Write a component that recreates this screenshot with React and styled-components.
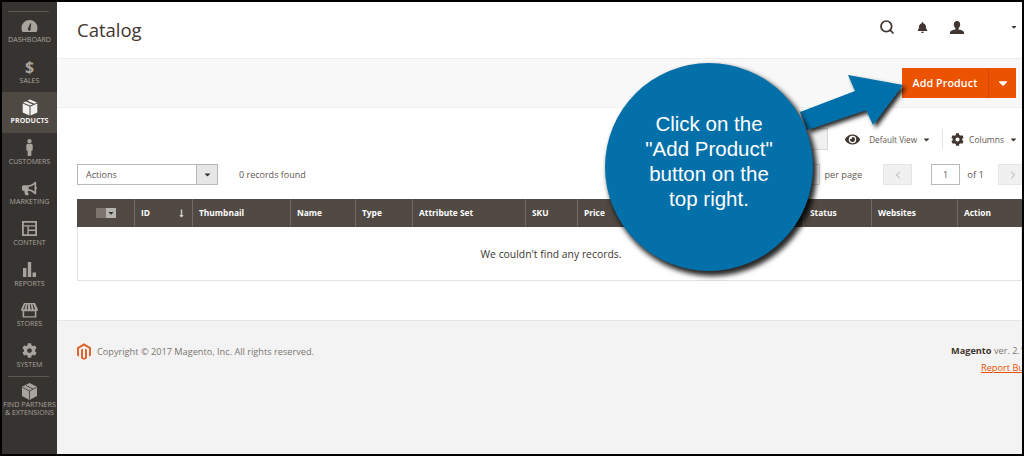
import React from "react";
import styled, { createGlobalStyle } from "styled-components";
import { FaBell, FaBullhorn, FaCog, FaEye, FaMale, FaCaretDown, FaLongArrowAltDown } from "react-icons/fa";
import { FiSearch, FiChevronLeft, FiChevronRight } from "react-icons/fi";

const Global = createGlobalStyle`
  html, body { margin: 0; padding: 0; background: #000; }
  body { font-family: "Open Sans", "Noto Sans", sans-serif; color: #41362f; }
`;

const Frame = styled.div`
  box-sizing: border-box;
  width: 1024px;
  height: 456px;
  border: 2px solid #000;
  display: flex;
  overflow: hidden;
  position: relative;
  background: #fff;
`;

const Sidebar = styled.nav`
  flex: 0 0 55px;
  background: #373330;
  padding-top: 9px;
  box-sizing: border-box;
`;

const NavItem = styled.div`
  position: relative;
  height: 40.6px;
  display: flex;
  flex-direction: column;
  align-items: center;
  background: ${(p) => (p.$active ? "#4f4943" : "transparent")};
  color: ${(p) => (p.$active ? "#f2f0ee" : "#a8a39d")};
  font-size: 7.1px;
  line-height: 8px;
  font-weight: ${(p) => (p.$active ? 700 : 400)};
  text-transform: uppercase;
  text-align: center;
  white-space: nowrap;
  ${(p) =>
    p.$rule &&
    `&::before { content: ""; position: absolute; top: 0; left: 6px; right: 8px; height: 1px; background: #5c5650; }`}
`;

const NavIcon = styled.div`
  height: 18px;
  margin-top: 6px;
  display: flex;
  align-items: center;
  justify-content: center;
  font-size: 16px;
  line-height: 1;
  font-weight: 700;
`;

const Main = styled.main`
  flex: 1 1 auto;
  min-width: 0;
  display: flex;
  flex-direction: column;
`;

const TopBar = styled.header`
  height: 56px;
  flex: none;
  display: flex;
  align-items: flex-start;
  justify-content: space-between;
  padding: 14px 4px 0 20px;
  box-sizing: border-box;
`;

const Title = styled.h1`
  margin: 0;
  font-size: 18.5px;
  line-height: 28px;
  font-weight: 400;
  color: #41362f;
`;

const TopIcons = styled.div`
  display: flex;
  align-items: center;
  height: 22px;
  color: #41362f;
`;

const TopIconSlot = styled.span`
  display: flex;
  justify-content: center;
  width: 35px;
  font-size: ${(p) => p.$size || 14}px;
`;

const AccountCaret = styled.span`
  display: flex;
  justify-content: center;
  width: 8px;
  margin-left: 35.5px;
  font-size: 8px;
`;

const ActionBand = styled.div`
  flex: none;
  height: 50px;
  box-sizing: border-box;
  background: #f8f8f8;
  border-top: 1px solid #eeeeee;
  border-bottom: 1px solid #eeeeee;
  display: flex;
  align-items: center;
  justify-content: flex-end;
  padding-right: 6px;
`;

const SplitButton = styled.div`
  display: flex;
  height: 30px;
  width: 114px;
  background: #eb5202;
  color: #fff;
  font-size: 10.7px;
  font-weight: 600;
`;

const ButtonLabel = styled.span`
  flex: 1;
  display: flex;
  align-items: center;
  justify-content: center;
  padding-bottom: 1px;
  letter-spacing: 0.1px;
`;

const ButtonCaret = styled.span`
  flex: 0 0 27px;
  display: flex;
  align-items: center;
  justify-content: center;
  border-left: 1px solid #d24a02;
  font-size: 14px;
`;

const ControlsRow = styled.div`
  margin-top: 20px;
  height: 22px;
  display: flex;
  align-items: center;
  justify-content: flex-end;
  padding-right: 4px;
  font-size: 8.5px;
  color: #5f5751;
`;

const SearchStub = styled.div`
  width: 190px;
  height: 22px;
  box-sizing: border-box;
  border: 1px solid #d9d7d5;
  background: #f0f0f0;
  margin-right: 17px;
`;

const ViewIcon = styled.span`
  display: flex;
  color: #41362f;
  font-size: ${(p) => p.$size}px;
  margin-right: ${(p) => p.$gap}px;
`;

const ViewLabel = styled.span`
  font-size: 8.2px;
`;

const SmallCaret = styled.span`
  display: flex;
  color: #41362f;
  font-size: 9px;
  margin-left: ${(p) => p.$gap}px;
`;

const Divider = styled.span`
  width: 1px;
  height: 20px;
  background: #e3e3e3;
  margin: 0 8px 0 11px;
`;

const PagerRow = styled.div`
  margin: 14px 0 0 20px;
  width: 950px;
  height: 21px;
  display: flex;
  align-items: center;
  font-size: 9px;
  color: #5f5751;
`;

const ActionSelect = styled.div`
  width: 141px;
  height: 21px;
  box-sizing: border-box;
  border: 1px solid #b9b6b3;
  display: flex;
  align-items: stretch;
  font-size: 9px;
`;

const SelectText = styled.span`
  flex: 1;
  display: flex;
  align-items: center;
  padding-left: 8px;
`;

const SelectCaret = styled.span`
  flex: 0 0 20px;
  display: flex;
  align-items: center;
  justify-content: center;
  background: #e6e6e6;
  border-left: 1px solid #b9b6b3;
  color: #303030;
  font-size: 9px;
`;

const Records = styled.span`
  margin-left: 21px;
`;

const PagerRight = styled.div`
  margin-left: auto;
  display: flex;
  align-items: center;
`;

const PerPageStub = styled.div`
  width: 60px;
  height: 21px;
  box-sizing: border-box;
  border: 1px solid #d9d7d5;
  margin-right: 4px;
`;

const PerPage = styled.span`
  font-size: 9.2px;
  margin-right: 21px;
`;

const PageButton = styled.span`
  width: 29px;
  height: 21px;
  display: flex;
  align-items: center;
  justify-content: center;
  background: #f0f0f0;
  border: 1px solid #e6e6e6;
  box-sizing: border-box;
  color: #b0aca8;
  font-size: 12px;
`;

const PageInput = styled.span`
  width: 29px;
  height: 21px;
  box-sizing: border-box;
  border: 1px solid #b9b6b3;
  display: flex;
  align-items: center;
  justify-content: center;
  margin: 0 7px 0 19px;
`;

const PageOf = styled.span`
  font-size: 9.5px;
  margin-right: 14px;
`;

const Table = styled.div`
  margin: 14px 0 0 20px;
  width: 963px;
`;

const HeadRow = styled.div`
  height: 28px;
  background: #514943;
  display: grid;
  grid-template-columns: 57px 58px 98px 65px 57px 113px 52px 226px 68px 86px 83px;
  color: #fff;
  font-size: 8.4px;
  font-weight: 700;
`;

const HeadCell = styled.div`
  display: flex;
  align-items: center;
  justify-content: ${(p) => (p.$center ? "center" : "space-between")};
  padding: 0 6px;
  border-left: ${(p) => (p.$first ? "none" : "1px solid #736a63")};
  box-sizing: border-box;
`;

const HeadLabel = styled.span`
  padding-bottom: 2px;
`;

const CheckStub = styled.span`
  width: 20px;
  height: 10px;
  display: flex;
  justify-content: flex-end;
  background: linear-gradient(90deg, #7c746e 50%, #b8b4b0 50%);
  color: #303030;
`;

const CheckCaret = styled.span`
  width: 10px;
  display: flex;
  align-items: center;
  justify-content: center;
  font-size: 8px;
`;

const EmptyBody = styled.div`
  height: 54px;
  box-sizing: border-box;
  border: 1px solid #e3e3e3;
  border-top: none;
  display: flex;
  align-items: center;
  justify-content: center;
  font-size: 10.4px;
  color: #41362f;
  width: 945px;
  padding-left: 3px;
`;

const Footer = styled.footer`
  margin-top: 39px;
  flex: 1;
  background: #f3f3f3;
  border-top: 1px solid #e6e6e6;
  display: flex;
  align-items: flex-start;
  justify-content: space-between;
  padding: 22px 0 0 20px;
  width: 981px;
  box-sizing: border-box;
  font-size: 9.2px;
  color: #7b7570;
`;

const Copyright = styled.div`
  display: flex;
  align-items: center;
  gap: 6px;
`;

const Logo = styled.svg`
  width: 14px;
  height: 17px;
  fill: #e2622a;
`;

const FooterRight = styled.div`
  width: 87px;
  flex: none;
  text-align: right;
  white-space: nowrap;
  line-height: 16px;
`;

const FooterLine = styled.div`
  padding-top: ${(p) => p.$pt || 0}px;
  text-align: left;
  padding-left: ${(p) => p.$pl || 0}px;
`;

const Strong = styled.strong`
  color: #41362f;
`;

const ReportLink = styled.span`
  color: #eb5202;
  text-decoration: underline;
`;

const Callout = styled.div`
  position: absolute;
  left: 603px;
  top: 61px;
  width: 208px;
  height: 208px;
  border-radius: 50%;
  background: #0470aa;
  box-shadow: 3px 4px 5px 1px rgba(0, 0, 0, 0.85);
  color: #fff;
  font-family: "Liberation Sans", Arial, sans-serif;
  font-size: 20.5px;
  line-height: 25px;
  display: flex;
  align-items: center;
  justify-content: center;
  text-align: center;
  padding-bottom: 12px;
  box-sizing: border-box;
`;

const Arrow = styled.svg`
  position: absolute;
  left: 788px;
  top: 61px;
  width: 120px;
  height: 80px;
  overflow: visible;
`;

const Gauge = () => (
  <svg width="17" height="14" viewBox="0 0 17 14" fill="currentColor">
    <path d="M8.5 1a8 8 0 0 0-8 8c0 1.6.4 3 1.2 4h13.6c.8-1 1.2-2.4 1.2-4a8 8 0 0 0-8-8zm1.2 10a1.6 1.6 0 0 1-2.9-1.2l2.6-5.6.9.3-.8 5.2c.2.4.3.9.2 1.3z" fillRule="evenodd" />
  </svg>
);
const Box = () => (
  <svg width="16" height="17" viewBox="0 0 16 17" fill="currentColor">
    <path d="M8 .5l7 3-2.6 1.2-7-3zM3.8 2.4l7 3L8 6.6l-7-3zM.7 4.6L7.5 7.5v9L.7 13.5zM15.3 4.6v8.9l-6.8 3v-9z" />
  </svg>
);
const Layout = () => (
  <svg width="15" height="15" viewBox="0 0 15 15" fill="currentColor">
    <path fillRule="evenodd" d="M0 0h15v15H0zM1.8 1.8v2.4h11.4V1.8zM1.8 5.6v7.6h3.6V5.6zM6.8 5.6v3h6.4v-3zM6.8 10v3.2h6.4V10z" />
  </svg>
);
const Bars = () => (
  <svg width="13" height="15" viewBox="0 0 13 15" fill="currentColor">
    <path d="M0 6h3.4v9H0zM4.8 0h3.4v15H4.8zM9.600 10.500H13V15H9.600z" />
  </svg>
);
const Store = () => (
  <svg width="17" height="15" viewBox="0 0 17 15" fill="currentColor">
    <path fillRule="evenodd" d="M3 0h11l3 6.5c0 1-.8 1.6-1.6 1.6v6.4H1.6V8.100C.8 8.100 0 7.500 0 6.500zM4.200 1.200L2.200 6.400h1.100l1.600-5.200zM6.600 1.200L5.600 6.400h1.100l.6-5.200zM9 1.200l.5 5.200h1.200L9.800 1.200zM11.400 1.200l1.500 5.200h1.300l-2-5.200zM3.200 8.300v4.900h10.600V8.300z" />
  </svg>
);
const Hexbox = () => (
  <svg width="17" height="17" viewBox="0 0 17 17" fill="currentColor">
    <path d="M8.500 0l7.500 3.800v9.200L8.500 17 1 13V3.800z" />
    <path d="M1.500 4.300L8.500 8l7-3.700M8.500 8v8.500M5 2.400l7 3.600" stroke="#373330" strokeWidth=".8" fill="none" />
  </svg>
);
const User = () => (
  <svg width="14" height="13" viewBox="0 0 14 13" fill="currentColor">
    <path d="M7 0c2 0 3.200 1.400 3.200 3.400 0 1.500-.7 2.900-1.600 3.600v1.400c1.800.4 5.400 1 5.400 3.200V13H0v-1.400c0-2.200 3.600-2.800 5.400-3.200V7C4.500 6.300 3.800 4.900 3.800 3.400 3.800 1.400 5 0 7 0z" />
  </svg>
);

const navItems = [
  { label: "Dashboard", icon: <Gauge />, rule: true },
  { label: "Sales", icon: "$" },
  { label: "Products", icon: <Box />, active: true },
  { label: "Customers", icon: <FaMale size={17} /> },
  { label: "Marketing", icon: <FaBullhorn size={15} /> },
  { label: "Content", icon: <Layout /> },
  { label: "Reports", icon: <Bars /> },
  { label: "Stores", icon: <Store /> },
  { label: "System", icon: <FaCog size={15} /> },
];

const columns = [
  ["ID", <FaLongArrowAltDown key="s" size={9} color="#cfcbc7" />],
  ["Thumbnail"],
  ["Name"],
  ["Type"],
  ["Attribute Set"],
  ["SKU"],
  ["Price"],
  ["Status"],
  ["Websites"],
  ["Action"],
];

export default function App() {
  return (
    <>
      <Global />
      <Frame>
        <Sidebar>
          {navItems.map((n) => (
            <NavItem key={n.label} $active={n.active} $rule={n.rule}>
              <NavIcon>{n.icon}</NavIcon>
              {n.label}
            </NavItem>
          ))}
          <NavItem $rule>
            <NavIcon>
              <Hexbox />
            </NavIcon>
            Find Partners
            <br />& Extensions
          </NavItem>
        </Sidebar>
        <Main>
          <TopBar>
            <Title>Catalog</Title>
            <TopIcons>
              <TopIconSlot $size={16}>
                <FiSearch strokeWidth={2.6} />
              </TopIconSlot>
              <TopIconSlot $size={11}>
                <FaBell />
              </TopIconSlot>
              <TopIconSlot>
                <User />
              </TopIconSlot>
              <AccountCaret>
                <FaCaretDown />
              </AccountCaret>
            </TopIcons>
          </TopBar>
          <ActionBand>
            <SplitButton>
              <ButtonLabel>Add Product</ButtonLabel>
              <ButtonCaret>
                <FaCaretDown />
              </ButtonCaret>
            </SplitButton>
          </ActionBand>
          <ControlsRow>
            <SearchStub />
            <ViewIcon $size={15} $gap={9}>
              <FaEye />
            </ViewIcon>
            <ViewLabel>Default View</ViewLabel>
            <SmallCaret $gap={5}>
              <FaCaretDown />
            </SmallCaret>
            <Divider />
            <ViewIcon $size={13} $gap={5}>
              <FaCog />
            </ViewIcon>
            Columns
            <SmallCaret $gap={5}>
              <FaCaretDown />
            </SmallCaret>
          </ControlsRow>
          <PagerRow>
            <ActionSelect>
              <SelectText>Actions</SelectText>
              <SelectCaret>
                <FaCaretDown />
              </SelectCaret>
            </ActionSelect>
            <Records>0 records found</Records>
            <PagerRight>
              <PerPageStub />
              <PerPage>per page</PerPage>
              <PageButton>
                <FiChevronLeft />
              </PageButton>
              <PageInput>1</PageInput>
              <PageOf>of 1</PageOf>
              <PageButton>
                <FiChevronRight />
              </PageButton>
            </PagerRight>
          </PagerRow>
          <Table>
            <HeadRow>
              <HeadCell $first $center>
                <CheckStub>
                  <CheckCaret>
                    <FaCaretDown />
                  </CheckCaret>
                </CheckStub>
              </HeadCell>
              {columns.map(([name, extra]) => (
                <HeadCell key={name}>
                  <HeadLabel>{name}</HeadLabel>
                  {extra}
                </HeadCell>
              ))}
            </HeadRow>
            <EmptyBody>We couldn't find any records.</EmptyBody>
          </Table>
          <Footer>
            <Copyright>
              <Logo viewBox="0 0 24 28">
                <path d="M12 0L0 7v14l3.400 2V9l8.600-5 8.600 5v14l3.400-2V7zM13.700 24.100L12 25.100l-1.700-1V9l-3.400 2v15l5.100 2 5.100-2V11l-3.400-2z" />
              </Logo>
              Copyright © 2017 Magento, Inc. All rights reserved.
            </Copyright>
            <FooterRight>
              <FooterLine>
                <Strong>Magento</Strong> ver. 2.1.7
              </FooterLine>
              <FooterLine $pl={30} $pt={1}>
                <ReportLink>Report Bugs</ReportLink>
              </FooterLine>
            </FooterRight>
          </Footer>
        </Main>
        <Arrow viewBox="0 0 120 80">
          <defs>
            <filter id="arrowShadow" x="-20%" y="-20%" width="150%" height="150%">
              <feDropShadow dx="3" dy="3" stdDeviation="2" floodColor="#000" floodOpacity="0.85" />
            </filter>
          </defs>
          <polygon
            points="10,49 65,28 58,12 113,22 83,62 76,47 17,67"
            fill="#0470aa"
            filter="url(#arrowShadow)"
          />
        </Arrow>
        <Callout>
          Click on the
          <br />
          "Add Product"
          <br />
          button on the
          <br />
          top right.
        </Callout>
      </Frame>
    </>
  );
}
